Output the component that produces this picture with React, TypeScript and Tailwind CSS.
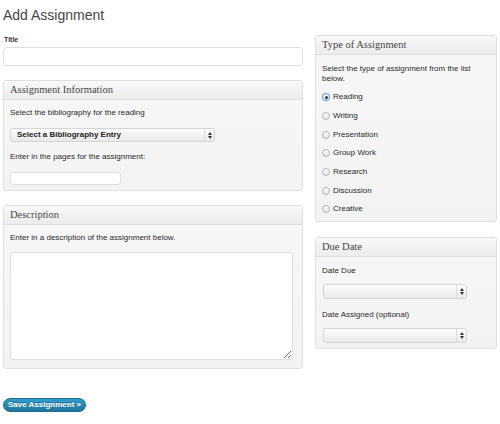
import React from 'react';

const sans = "font-['Liberation_Sans',Arial,sans-serif]";
const serif = "font-['Liberation_Serif','Times_New_Roman',serif]";

function SelectBox({ label, className }: { label?: string; className: string }) {
  return (
    <div
      className={`${className} flex items-stretch rounded-[3px] border border-[#d4d4d4] bg-gradient-to-b from-[#fdfdfd] to-[#e9e9e9] shadow-[inset_0_1px_0_#fff]`}
    >
      <div className="flex-1 pl-[6px] text-[8px] font-bold leading-[12px] text-[#222] flex items-center">{label}</div>
      <div className="w-[10px] border-l border-[#dcdcdc] flex items-center justify-center">
        <svg width="4" height="7" viewBox="0 0 4 7">
          <path d="M0 3 L2 0 L4 3 Z" fill="#333" />
          <path d="M0 4 L2 7 L4 4 Z" fill="#333" />
        </svg>
      </div>
    </div>
  );
}

function Panel({ title, children, className = '' }: { title: string; children: React.ReactNode; className?: string }) {
  return (
    <div className={`${className} rounded-[3px] border border-[#dfdfdf] bg-gradient-to-b from-[#f7f7f7] to-[#f3f3f3]`}>
      <div className={`h-[19px] border-b border-[#dfdfdf] bg-gradient-to-b from-[#f9f9f9] to-[#ececec] pl-[6px] ${serif} text-[10.5px] leading-[18px] text-[#464646]`}>
        {title}
      </div>
      {children}
    </div>
  );
}

function Radio({ label, checked = false }: { label: string; checked?: boolean }) {
  return (
    <div className="h-[18.7px] flex items-center">
      <span
        className={`w-[8px] h-[8px] rounded-full border flex items-center justify-center bg-gradient-to-b from-[#fafafa] to-[#e6e6e6] ${
          checked ? 'border-[#5b9dd9] shadow-[0_0_1px_#5b9dd9]' : 'border-[#b5b5b5]'
        }`}
      >
        {checked && <span className="w-[3px] h-[3px] rounded-full bg-[#333]" />}
      </span>
      <span className="ml-[3px] text-[8px] leading-[10px] text-[#2a2a2a]">{label}</span>
    </div>
  );
}

export default function App() {
  const types = ['Reading', 'Writing', 'Presentation', 'Group Work', 'Research', 'Discussion', 'Creative'];

  return (
    <div className={`w-[500px] h-[424px] bg-white px-[3px] ${sans} text-[#2a2a2a] overflow-hidden`}>
      <h1 className="text-[14px] leading-[30px] text-[#464646]">Add Assignment</h1>

      <div className="mt-[5px] flex gap-[12px]">
        {/* Left column */}
        <div className="w-[300px]">
          <div className="text-[7px] font-bold leading-[10px] pl-[1px] text-[#333]">Title</div>
          <input className="mt-[2px] block w-full h-[19px] rounded-[3px] border border-[#dfdfdf] bg-white outline-none" />

          <Panel title="Assignment Information" className="mt-[14px]">
            <div className="px-[6px] pt-[8px] pb-[5px]">
              <p className="text-[8px] leading-[10px]">Select the bibliography for the reading</p>
              <SelectBox label="Select a Bibliography Entry" className="mt-[10px] w-[205px] h-[14px]" />
              <p className="mt-[10px] text-[8px] leading-[10px]">Enter in the pages for the assignment:</p>
              <input className="mt-[10px] block w-[111px] h-[13px] rounded-[3px] border border-[#dfdfdf] bg-white outline-none" />
            </div>
          </Panel>

          <Panel title="Description" className="mt-[14px]">
            <div className="pl-[6px] pr-[9px] pt-[8px] pb-[8px]">
              <p className="text-[8px] leading-[10px]">Enter in a description of the assignment below.</p>
              <textarea className="mt-[9px] block w-[283px] h-[108px] rounded-[3px] border border-[#dfdfdf] bg-white outline-none resize" />
            </div>
          </Panel>

          <button className="mt-[29px] h-[14px] w-[83px] rounded-full border border-[#1e6a90] bg-gradient-to-b from-[#2e9fd2] to-[#21759b] text-[8px] font-bold leading-[12px] text-white [text-shadow:0_-1px_0_rgba(0,0,0,0.3)]">
            Save Assignment »
          </button>
        </div>

        {/* Right column */}
        <div className="w-[182px]">
          <Panel title="Type of Assignment">
            <div className="px-[6px] pt-[9px] pb-[2px]">
              <p className="text-[8px] leading-[10px]">Select the type of assignment from the list below.</p>
              <div className="mt-[4px]">
                {types.map((t) => (
                  <Radio key={t} label={t} checked={t === 'Reading'} />
                ))}
              </div>
            </div>
          </Panel>

          <Panel title="Due Date" className="mt-[15px]">
            <div className="px-[6px] pt-[9px] pb-[5px]">
              <p className="text-[8px] leading-[10px]">Date Due</p>
              <SelectBox className="mt-[8px] ml-[1px] w-[144px] h-[15px]" />
              <p className="mt-[11px] text-[8px] leading-[10px]">Date Assigned (optional)</p>
              <SelectBox className="mt-[8px] ml-[1px] w-[144px] h-[15px]" />
            </div>
          </Panel>
        </div>
      </div>
    </div>
  );
}
